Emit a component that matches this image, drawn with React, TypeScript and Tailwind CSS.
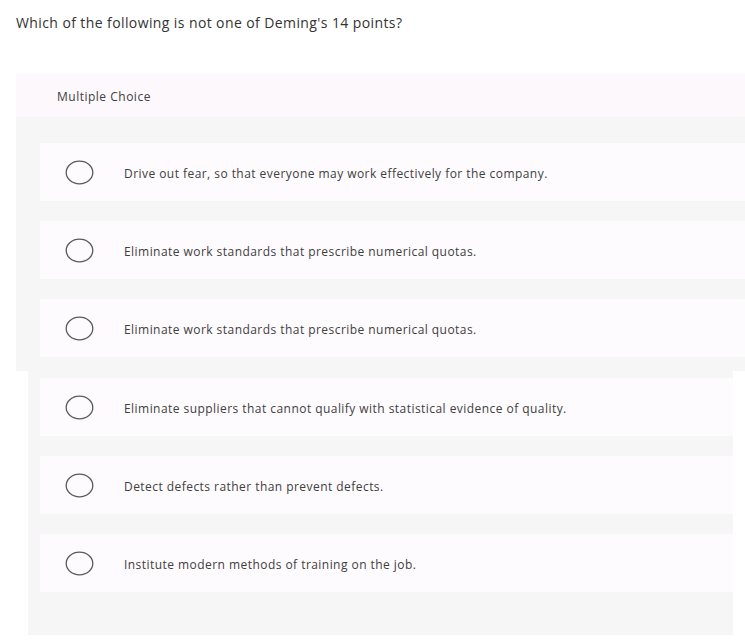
const upper = [
  'Drive out fear, so that everyone may work effectively for the company.',
  'Eliminate work standards that prescribe numerical quotas.',
  'Eliminate work standards that prescribe numerical quotas.',
];

const lower = [
  'Eliminate suppliers that cannot qualify with statistical evidence of quality.',
  'Detect defects rather than prevent defects.',
  'Institute modern methods of training on the job.',
];

function Radio() {
  return (
    <svg width="29" height="25" viewBox="0 0 29 25" className="shrink-0">
      <ellipse cx="14.5" cy="12.5" rx="13.3" ry="11.3" fill="none" stroke="#5a5a5a" strokeWidth="1.3" />
    </svg>
  );
}

function Option({ text }: { text: string }) {
  return (
    <div className="flex h-[58px] items-center bg-[#fdfbfd] pl-[25px]">
      <Radio />
      <span className="ml-[30px] pt-[4px] text-[12px] tracking-[0.45px] text-[#404040]">{text}</span>
    </div>
  );
}

export default function App() {
  return (
    <div
      className="h-[644px] w-[745px] overflow-hidden bg-white"
      style={{ fontFamily: '"Open Sans", Lato, sans-serif' }}
    >
      <div className="px-4 pt-[12px] text-[14px] tracking-[0.4px] text-[#333]">
        Which of the following is not one of Deming's 14 points?
      </div>

      {/* upper panel */}
      <div className="ml-4 mt-[41px] w-[760px] bg-[#f6f6f6] pb-[14px]">
        <div className="flex h-[43px] items-center bg-[#fcf8fc] pl-[41px] pt-[3px] text-[12px] tracking-[0.5px] text-[#404040]">
          Multiple Choice
        </div>
        <div className="flex flex-col gap-5 pl-6 pt-[26px]">
          {upper.map((t, i) => (
            <Option key={i} text={t} />
          ))}
        </div>
      </div>

      {/* lower panel */}
      <div className="ml-7 w-[705px] bg-[#f6f6f6] pb-[43px] pt-[7px]">
        <div className="flex flex-col gap-5 pl-3">
          {lower.map((t, i) => (
            <Option key={i} text={t} />
          ))}
        </div>
      </div>
    </div>
  );
}
